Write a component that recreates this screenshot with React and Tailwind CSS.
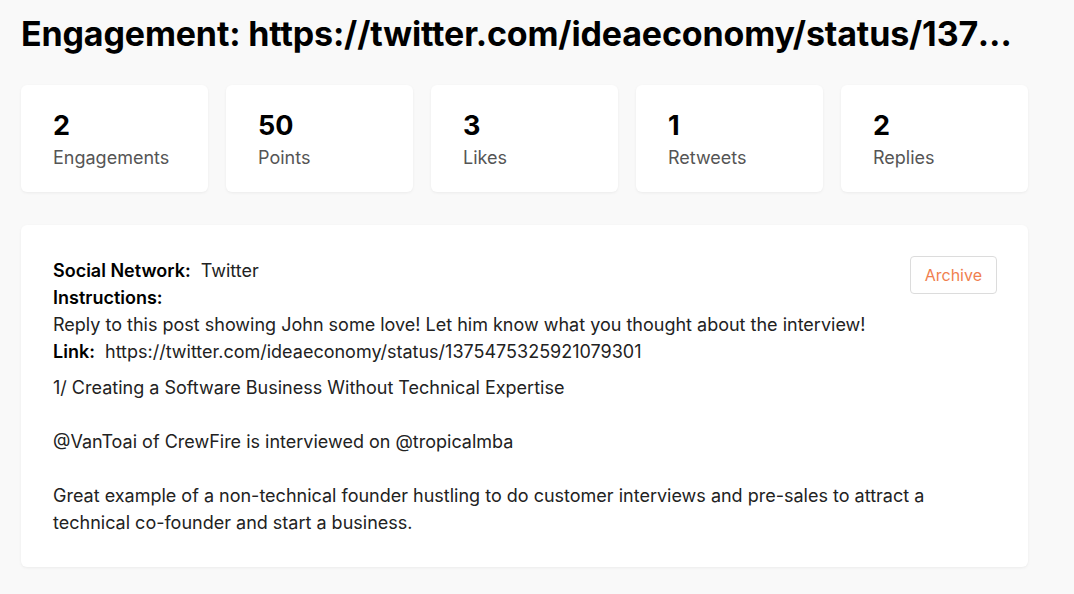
import React from 'react'

const stats = [
  { value: '2', label: 'Engagements' },
  { value: '50', label: 'Points' },
  { value: '3', label: 'Likes' },
  { value: '1', label: 'Retweets' },
  { value: '2', label: 'Replies' },
]

export default function App() {
  return (
    <div className="min-h-[594px] bg-[#f9f9f9] font-['Inter',sans-serif] text-[#1a1a1a]">
      <div className="w-[1007px] ml-[21px] pt-[13px]">
        <h1 className="truncate text-[34px] font-bold leading-[42px] tracking-[-0.15px] text-black">
          Engagement: https://twitter.com/ideaeconomy/status/1375475325921079301
        </h1>

        {/* Stats */}
        <div className="mt-[30px] grid grid-cols-5 gap-[18px]">
          {stats.map(({ value, label }) => (
            <div key={label} className="h-[107px] rounded-md bg-white px-8 pt-[25px] shadow-[0_1px_3px_rgba(0,0,0,0.06)]">
              <div className="text-[27px] font-bold leading-[32px] text-black">{value}</div>
              <div className="mt-[4px] text-[18px] leading-[24px] text-[#555]">{label}</div>
            </div>
          ))}
        </div>

        {/* Details card */}
        <div className="mt-[33px] rounded-md bg-white pl-8 pr-[31px] pt-[32px] pb-[31px] shadow-[0_1px_3px_rgba(0,0,0,0.06)]">
          <div className="flex items-start justify-between">
            <div className="text-[18px] leading-[27px] text-[#222]">
              <div>
                <span className="font-semibold text-black">Social Network:</span>&nbsp; Twitter
              </div>
              <div className="font-semibold text-black">Instructions:</div>
              <div>Reply to this post showing John some love! Let him know what you thought about the interview!</div>
              <div>
                <span className="font-semibold text-black">Link:</span>&nbsp; https://twitter.com/ideaeconomy/status/1375475325921079301
              </div>
            </div>
            <button className="-mt-[1px] h-[38px] rounded border border-[#dcdcdc] bg-white px-[14px] text-[16px] text-[#f07f4f]">
              Archive
            </button>
          </div>
          <div className="mt-[9px] text-[18px] leading-[27px] text-[#222]">
            <p>1/ Creating a Software Business Without Technical Expertise</p>
            <p className="mt-[27px]">@VanToai of CrewFire is interviewed on @tropicalmba</p>
            <p className="mt-[27px] w-[900px]">
              Great example of a non-technical founder hustling to do customer interviews and pre-sales to attract a technical co-founder and start a business.
            </p>
          </div>
        </div>
      </div>
    </div>
  )
}
